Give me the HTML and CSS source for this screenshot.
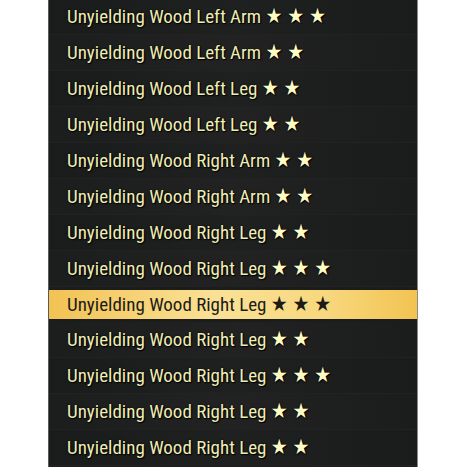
FILE: index.html
```html
<!DOCTYPE html>
<html>
<head>
    <title>Inventory</title>
    <link rel="stylesheet" href="styles.css">
</head>
<body>

<div class="panel">
    <ul class="item-list">
        <li class="item">Unyielding Wood Left Arm <span class="stars">★ ★ ★</span></li>
        <li class="item">Unyielding Wood Left Arm <span class="stars">★ ★</span></li>
        <li class="item">Unyielding Wood Left Leg <span class="stars">★ ★</span></li>
        <li class="item">Unyielding Wood Left Leg <span class="stars">★ ★</span></li>
        <li class="item">Unyielding Wood Right Arm <span class="stars">★ ★</span></li>
        <li class="item">Unyielding Wood Right Arm <span class="stars">★ ★</span></li>
        <li class="item">Unyielding Wood Right Leg <span class="stars">★ ★</span></li>
        <li class="item">Unyielding Wood Right Leg <span class="stars">★ ★ ★</span></li>
        <li class="item selected">Unyielding Wood Right Leg <span class="stars">★ ★ ★</span></li>
        <li class="item">Unyielding Wood Right Leg <span class="stars">★ ★</span></li>
        <li class="item">Unyielding Wood Right Leg <span class="stars">★ ★ ★</span></li>
        <li class="item">Unyielding Wood Right Leg <span class="stars">★ ★</span></li>
        <li class="item">Unyielding Wood Right Leg <span class="stars">★ ★</span></li>
    </ul>
</div>

</body>
</html>
```

FILE: styles.css
```css
body {
    margin: 0;
    background: #fff;
    font-family: 'Roboto Condensed', 'Liberation Sans Narrow', 'DejaVu Sans Condensed', sans-serif;
}

.panel {
    margin-left: 48px;
    width: 368px;
    height: 467px;
    overflow: hidden;
    background: #1b1c1c;
    border-left: 1px solid #5a5a5a;
    border-right: 1px solid #8a8a8a;
}

.item-list {
    list-style: none;
    margin: -1px 0 0 0;
    padding: 0;
}

.item {
    height: 35px;
    line-height: 35px;
    padding-left: 18px;
    font-size: 19px;
    color: #efedb6;
    text-shadow: 1px 1px 1px #000, 0 0 2px #000;
    border-bottom: 1px solid #212222;
    background: linear-gradient(90deg, #1a1b1b, #1f2020 50%, #1a1b1b);
    white-space: nowrap;
}

.item:nth-child(even) {
    background: linear-gradient(90deg, #1c1d1d, #212221 50%, #1b1c1c);
}

.stars {
    font-size: 21px;
    color: #fffbc4;
}

.item.selected {
    height: 29px;
    line-height: 29px;
    margin: 3px 0;
    border-bottom: none;
    color: #1d1b16;
    text-shadow: none;
    background: linear-gradient(90deg, #f2c254, #fae196 45%, #f7d87e 75%, #f2c352);
}

.item.selected .stars {
    color: #1d1b16;
}
```
